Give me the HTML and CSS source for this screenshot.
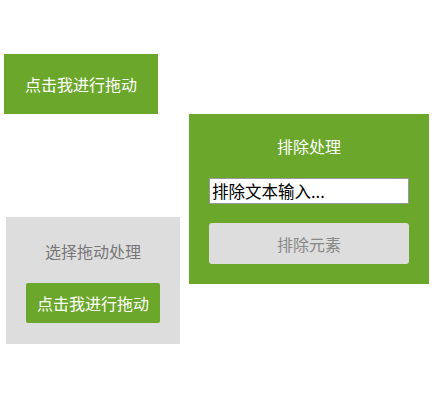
FILE: index.html
```html
<!DOCTYPE html>
<html lang="zh">
<head>
<meta charset="utf-8">
<link rel="stylesheet" href="styles.css">
</head>
<body>
<div class="canvas">
  <div class="drag-item" draggable="true">点击我进行拖动</div>
  <div class="zone zone-remove">
    <div class="zone-title">排除处理</div>
    <input class="remove-input" type="text" value="排除文本输入...">
    <button class="remove-btn">排除元素</button>
  </div>
  <div class="zone zone-select">
    <div class="select-title">选择拖动处理</div>
    <div class="drag-item small" draggable="true">点击我进行拖动</div>
  </div>
</div>
</body>
</html>
```
FILE: styles.css
```css
html, body {
  margin: 0;
  padding: 0;
  background: #fff;
}
body {
  font-family: "Noto Sans CJK SC", "Noto Sans", sans-serif;
}
.canvas {
  position: relative;
  width: 436px;
  height: 405px;
}
.drag-item {
  position: absolute;
  left: 4px;
  top: 54px;
  width: 154px;
  height: 60px;
  background: #6ba72b;
  color: #fff;
  font-size: 16px;
  display: flex;
  align-items: center;
  justify-content: center;
  box-sizing: border-box;
}
.zone {
  position: absolute;
  box-sizing: border-box;
}
.zone-remove {
  left: 189px;
  top: 114px;
  width: 240px;
  height: 170px;
  background: #6ba72b;
  padding: 19px 20px 20px;
  display: flex;
  flex-direction: column;
}
.zone-title {
  color: #fff;
  font-size: 16px;
  line-height: 26px;
  text-align: center;
}
.remove-input {
  margin-top: 19px;
  width: 200px;
  height: 26px;
  box-sizing: border-box;
  border: 1px solid #999;
  padding: 0 2px;
  font-family: "Noto Sans CJK SC", sans-serif;
  font-size: 16.5px;
  color: #000;
  background: #fff;
  outline: none;
}
.remove-btn {
  margin-top: 19px;
  width: 200px;
  height: 41px;
  border: none;
  border-radius: 3px;
  background: #dddddd;
  color: #888;
  font-family: "Noto Sans CJK SC", sans-serif;
  font-size: 16px;
  padding: 0;
}
.zone-select {
  left: 6px;
  top: 217px;
  width: 174px;
  height: 127px;
  background: #dddddd;
  display: flex;
  flex-direction: column;
  align-items: center;
}
.select-title {
  margin-top: 21px;
  color: #777;
  font-size: 16px;
  line-height: 26px;
}
.drag-item.small {
  position: static;
  margin-top: 19px;
  width: 134px;
  height: 40px;
  border-radius: 2px;
}
```
